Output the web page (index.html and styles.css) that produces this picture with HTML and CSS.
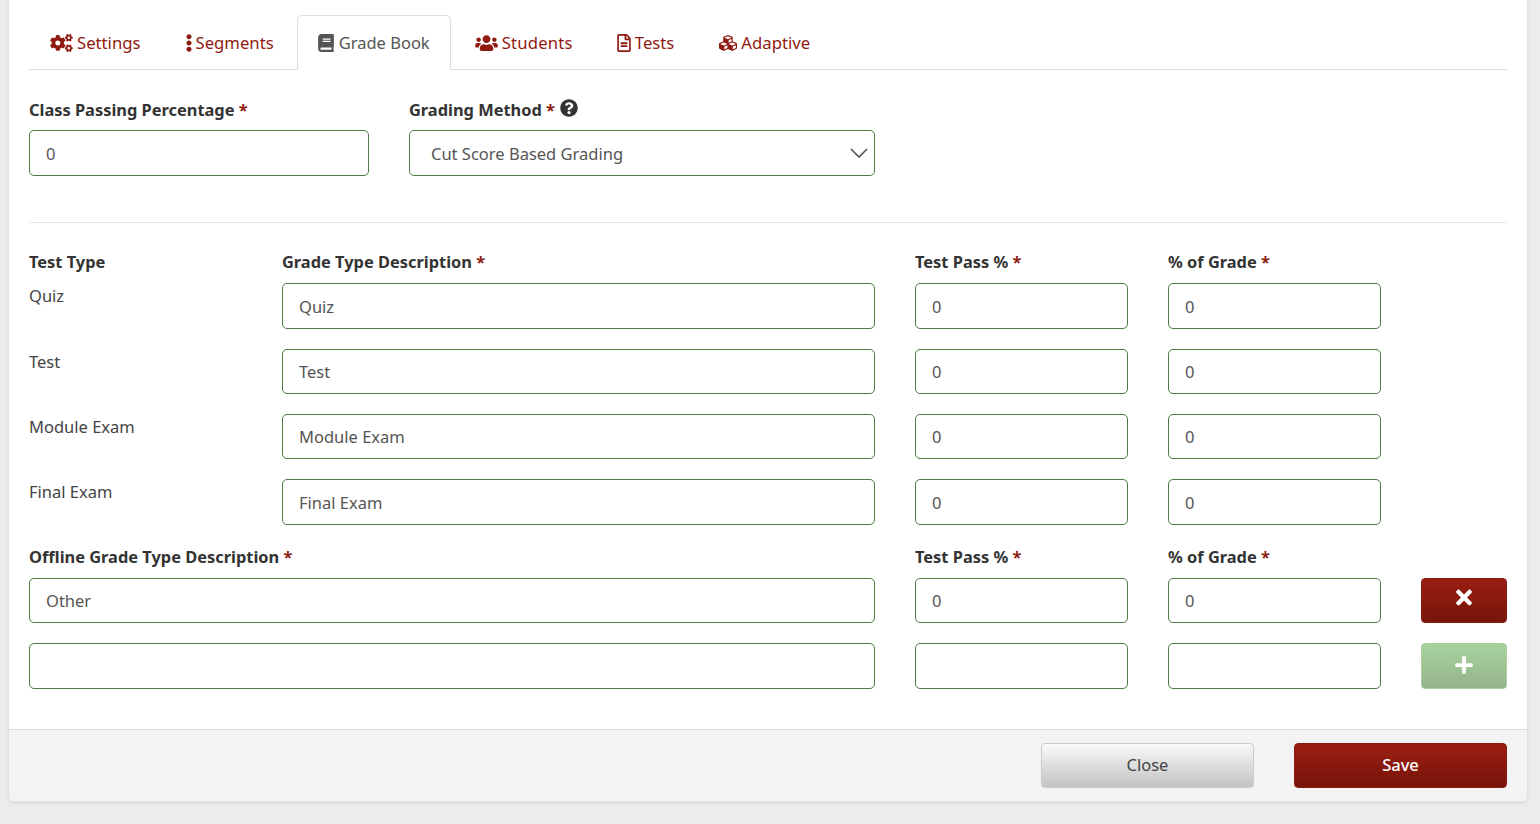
FILE: index.html
```html
<!DOCTYPE html>
<html lang="en">
<head>
  <meta charset="UTF-8">
  <meta name="viewport" content="width=device-width, initial-scale=1.0">
  <title>Grade Book</title>
  <link rel="stylesheet" href="styles.css">
</head>
<body>

<div class="card">
  <div class="card-body">

    <ul class="tabs">
      <li class="tab">
        <svg class="icon icon-cogs" viewBox="0 0 640 512"><path d="M512.1 191l-8.2 14.3c-3 5.3-9.4 7.5-15.1 5.4-11.8-4.4-22.6-10.7-32.1-18.6-4.6-3.8-5.8-10.5-2.8-15.7l8.2-14.3c-6.9-8-12.3-17.3-15.9-27.4h-16.5c-6 0-11.2-4.3-12.2-10.3-2-12-2.1-24.6 0-37.1 1-6 6.2-10.4 12.2-10.4h16.5c3.6-10.1 9-19.4 15.9-27.4l-8.2-14.3c-3-5.2-1.9-11.9 2.8-15.7 9.5-7.9 20.4-14.2 32.1-18.6 5.7-2.1 12.1.1 15.1 5.4l8.2 14.3c10.5-1.9 21.2-1.9 31.7 0L552 6.3c3-5.3 9.4-7.5 15.1-5.4 11.8 4.4 22.6 10.7 32.1 18.6 4.6 3.8 5.8 10.5 2.8 15.7l-8.2 14.3c6.9 8 12.3 17.3 15.9 27.4h16.5c6 0 11.2 4.3 12.2 10.3 2 12 2.1 24.6 0 37.1-1 6-6.2 10.4-12.2 10.4h-16.5c-3.6 10.1-9 19.4-15.9 27.4l8.2 14.3c3 5.2 1.9 11.9-2.8 15.7-9.5 7.9-20.4 14.2-32.1 18.6-5.7 2.1-12.1-.1-15.1-5.4l-8.2-14.3c-10.4 1.9-21.2 1.9-31.7 0zm-10.5-58.8c38.5 29.6 82.4-14.3 52.8-52.8-38.5-29.7-82.4 14.3-52.8 52.8zM386.3 286.1l33.7 16.8c10.1 5.8 14.5 18.1 10.5 29.1-8.9 24.2-26.4 46.4-42.6 65.8-7.4 8.9-20.2 11.1-30.3 5.3l-29.1-16.8c-16 13.7-34.6 24.6-54.9 31.7v33.6c0 11.6-8.3 21.6-19.7 23.6-24.6 4.2-50.4 4.4-75.9 0-11.5-2-20-11.9-20-23.6V418c-20.3-7.2-38.9-18-54.9-31.7L74 403c-10 5.8-22.9 3.6-30.3-5.3-16.2-19.4-33.3-41.6-42.2-65.7-4-10.9.4-23.2 10.5-29.1l33.3-16.8c-3.9-20.9-3.9-42.4 0-63.4L12 205.8c-10.1-5.8-14.6-18.1-10.5-29 8.9-24.2 26-46.4 42.2-65.8 7.4-8.9 20.2-11.1 30.3-5.3l29.1 16.8c16-13.7 34.6-24.6 54.9-31.7V57.1c0-11.5 8.2-21.5 19.6-23.5 24.6-4.2 50.5-4.4 76-.1 11.5 2 20 11.9 20 23.6v33.6c20.3 7.2 38.9 18 54.9 31.7l29.1-16.8c10-5.8 22.9-3.6 30.3 5.3 16.2 19.4 33.2 41.6 42.1 65.8 4 10.9.1 23.2-10 29.1l-33.7 16.8c3.9 21 3.9 42.5 0 63.5zm-117.6 21.1c59.2-77-28.7-164.9-105.7-105.7-59.2 77 28.7 164.9 105.7 105.7zm243.4 182.7l-8.2 14.3c-3 5.3-9.4 7.5-15.1 5.4-11.8-4.4-22.6-10.7-32.1-18.6-4.6-3.8-5.8-10.5-2.8-15.7l8.2-14.3c-6.9-8-12.3-17.3-15.9-27.4h-16.5c-6 0-11.2-4.3-12.2-10.3-2-12-2.1-24.6 0-37.1 1-6 6.2-10.4 12.2-10.4h16.5c3.6-10.1 9-19.4 15.9-27.4l-8.2-14.3c-3-5.2-1.9-11.9 2.8-15.7 9.5-7.9 20.4-14.2 32.1-18.6 5.7-2.1 12.1.1 15.1 5.4l8.2 14.3c10.5-1.9 21.2-1.9 31.7 0l8.2-14.3c3-5.3 9.4-7.5 15.1-5.4 11.8 4.4 22.6 10.7 32.1 18.6 4.6 3.8 5.8 10.5 2.8 15.7l-8.2 14.3c6.9 8 12.3 17.3 15.9 27.4h16.5c6 0 11.2 4.3 12.2 10.3 2 12 2.1 24.6 0 37.1-1 6-6.2 10.4-12.2 10.4h-16.5c-3.6 10.1-9 19.4-15.9 27.4l8.2 14.3c3 5.2 1.9 11.9-2.8 15.7-9.5 7.9-20.4 14.2-32.1 18.6-5.7 2.1-12.1-.1-15.1-5.4l-8.2-14.3c-10.4 1.9-21.2 1.9-31.7 0zM501.6 431c38.5 29.6 82.4-14.3 52.8-52.8-38.5-29.6-82.4 14.3-52.8 52.8z"/></svg>
        Settings
      </li>
      <li class="tab">
        <svg class="icon icon-dots" viewBox="0 0 192 512"><path d="M96 184c39.8 0 72 32.2 72 72s-32.2 72-72 72-72-32.2-72-72 32.2-72 72-72zM24 80c0 39.8 32.2 72 72 72s72-32.2 72-72S135.8 8 96 8 24 40.2 24 80zm0 352c0 39.8 32.2 72 72 72s72-32.2 72-72-32.2-72-72-72-72 32.2-72 72z"/></svg>
        Segments
      </li>
      <li class="tab active">
        <svg class="icon icon-book" viewBox="0 0 448 512"><path d="M448 360V24c0-13.3-10.7-24-24-24H96C43 0 0 43 0 96v320c0 53 43 96 96 96h328c13.3 0 24-10.7 24-24v-16c0-7.5-3.5-14.3-8.9-18.7-4.2-15.4-4.2-59.3 0-74.7 5.4-4.3 8.9-11.1 8.9-18.6zM128 134c0-3.3 2.7-6 6-6h212c3.3 0 6 2.7 6 6v20c0 3.3-2.7 6-6 6H134c-3.3 0-6-2.7-6-6v-20zm0 64c0-3.3 2.7-6 6-6h212c3.3 0 6 2.7 6 6v20c0 3.3-2.7 6-6 6H134c-3.3 0-6-2.7-6-6v-20zm253.4 250H96c-17.7 0-32-14.3-32-32 0-17.6 14.4-32 32-32h285.4c-1.9 17.1-1.9 46.9 0 64z"/></svg>
        Grade Book
      </li>
      <li class="tab tab-students">
        <svg class="icon icon-users" viewBox="0 0 640 512"><path d="M96 224c35.3 0 64-28.7 64-64s-28.7-64-64-64-64 28.7-64 64 28.7 64 64 64zm448 0c35.3 0 64-28.7 64-64s-28.7-64-64-64-64 28.7-64 64 28.7 64 64 64zm32 32h-64c-17.6 0-33.5 7.1-45.1 18.6 40.3 22.1 68.9 62 75.1 109.4h66c17.7 0 32-14.3 32-32v-32c0-35.3-28.7-64-64-64zm-256 0c61.9 0 112-50.1 112-112S381.9 32 320 32 208 82.1 208 144s50.1 112 112 112zm76.8 32h-8.3c-20.8 10-43.9 16-68.5 16s-47.6-6-68.5-16h-8.3C179.6 288 128 339.6 128 403.2V432c0 26.5 21.5 48 48 48h288c26.5 0 48-21.5 48-48v-28.8c0-63.6-51.6-115.2-115.2-115.2zm-223.7-13.4C161.5 263.1 145.6 256 128 256H64c-35.3 0-64 28.7-64 64v32c0 17.7 14.3 32 32 32h65.9c6.3-47.4 34.9-87.3 75.2-109.4z"/></svg>
        Students
      </li>
      <li class="tab">
        <svg class="icon icon-file" viewBox="0 0 384 512"><path d="M288 248v28c0 6.6-5.4 12-12 12H108c-6.6 0-12-5.4-12-12v-28c0-6.6 5.4-12 12-12h168c6.6 0 12 5.4 12 12zm-12 72H108c-6.6 0-12 5.4-12 12v28c0 6.6 5.4 12 12 12h168c6.6 0 12-5.4 12-12v-28c0-6.6-5.4-12-12-12zm108-188.1V464c0 26.5-21.5 48-48 48H48c-26.5 0-48-21.5-48-48V48C0 21.5 21.5 0 48 0h204.1C264.8 0 277 5.1 286 14.1L369.9 98c9 8.9 14.1 21.2 14.1 33.9zm-128-80V128h76.1L256 51.9zM336 464V176H232c-13.3 0-24-10.7-24-24V48H48v416h288z"/></svg>
        Tests
      </li>
      <li class="tab">
        <svg class="icon icon-cubes" viewBox="0 0 512 512"><path d="M488.6 250.2L392 214V105.5c0-15-9.3-28.4-23.4-33.7l-100-37.5c-8.1-3.1-17.1-3.1-25.3 0l-100 37.5c-14.1 5.3-23.4 18.7-23.4 33.7V214l-96.6 36.2C9.3 255.5 0 268.9 0 283.9V394c0 13.6 7.7 26.1 19.9 32.2l100 50c10.1 5.1 22.1 5.1 32.2 0l103.9-52 103.9 52c10.1 5.1 22.1 5.1 32.2 0l100-50c12.2-6.1 19.9-18.6 19.9-32.2V283.9c0-15-9.3-28.4-23.4-33.7zM358 214.8l-85 31.9v-68.2l85-37v73.3zM154 104.1l102-38.2 102 38.2v.6l-102 41.4-102-41.4v-.6zm84 291.1l-85 42.5v-79.1l85-38.8v75.4zm0-112l-102 41.4-102-41.4v-.6l102-38.2 102 38.2v.6zm240 112l-85 42.5v-79.1l85-38.8v75.4zm0-112l-102 41.4-102-41.4v-.6l102-38.2 102 38.2v.6z"/></svg>
        Adaptive
      </li>
    </ul>

    <div class="top-row">
      <div class="field field-passing">
        <label class="label">Class Passing Percentage <span class="req">*</span></label>
        <input class="input" type="text" value="0">
      </div>
      <div class="field field-method">
        <label class="label">Grading Method <span class="req">*</span>
          <svg class="icon-help" viewBox="0 0 512 512"><path d="M504 256c0 136.997-111.043 248-248 248S8 392.997 8 256C8 119.083 119.043 8 256 8s248 111.083 248 248zM262.655 90c-54.497 0-89.255 22.957-116.549 63.758-3.536 5.286-2.353 12.415 2.715 16.258l34.699 26.31c5.205 3.947 12.621 3.008 16.665-2.122 17.864-22.658 30.113-35.797 57.303-35.797 20.429 0 45.698 13.148 45.698 32.958 0 14.976-12.363 22.667-32.534 33.976C247.128 238.528 216 254.941 216 296v4c0 6.627 5.373 12 12 12h56c6.627 0 12-5.373 12-12v-1.333c0-28.462 83.186-29.647 83.186-106.667 0-58.002-60.165-102-116.531-102zM256 338c-25.365 0-46 20.635-46 46 0 25.364 20.635 46 46 46s46-20.636 46-46c0-25.365-20.635-46-46-46z"/></svg>
        </label>
        <div class="select-wrap">
          <select class="input select">
            <option>Cut Score Based Grading</option>
          </select>
          <svg class="chevron" viewBox="0 0 18 11"><path d="M1 1l8 8 8-8" fill="none" stroke="#555" stroke-width="1.6"/></svg>
        </div>
      </div>
    </div>

    <hr class="divider">

    <div class="grade-row grade-head">
      <label class="label">Test Type</label>
      <label class="label">Grade Type Description <span class="req">*</span></label>
      <label class="label">Test Pass % <span class="req">*</span></label>
      <label class="label">% of Grade <span class="req">*</span></label>
    </div>
    <div class="grade-row">
      <div class="type-name">Quiz</div>
      <input class="input" type="text" value="Quiz">
      <input class="input" type="text" value="0">
      <input class="input" type="text" value="0">
    </div>
    <div class="grade-row">
      <div class="type-name">Test</div>
      <input class="input" type="text" value="Test">
      <input class="input" type="text" value="0">
      <input class="input" type="text" value="0">
    </div>
    <div class="grade-row">
      <div class="type-name">Module Exam</div>
      <input class="input" type="text" value="Module Exam">
      <input class="input" type="text" value="0">
      <input class="input" type="text" value="0">
    </div>
    <div class="grade-row">
      <div class="type-name">Final Exam</div>
      <input class="input" type="text" value="Final Exam">
      <input class="input" type="text" value="0">
      <input class="input" type="text" value="0">
    </div>

    <div class="grade-row grade-head">
      <label class="label span-2">Offline Grade Type Description <span class="req">*</span></label>
      <label class="label">Test Pass % <span class="req">*</span></label>
      <label class="label">% of Grade <span class="req">*</span></label>
    </div>
    <div class="grade-row">
      <input class="input span-2" type="text" value="Other">
      <input class="input" type="text" value="0">
      <input class="input" type="text" value="0">
      <button class="btn btn-red" type="button">
        <svg class="btn-icon icon-times" viewBox="0 0 352 512"><path d="M242.72 256l100.07-100.07c12.28-12.28 12.28-32.19 0-44.48l-22.24-22.24c-12.28-12.28-32.19-12.28-44.48 0L176 189.28 75.93 89.21c-12.28-12.28-32.19-12.28-44.48 0L9.21 111.45c-12.28 12.28-12.28 32.19 0 44.48L109.28 256 9.21 356.07c-12.28 12.28-12.28 32.19 0 44.48l22.24 22.24c12.28 12.28 32.2 12.28 44.48 0L176 322.72l100.07 100.07c12.28 12.28 32.2 12.28 44.48 0l22.24-22.24c12.28-12.28 12.28-32.19 0-44.48L242.72 256z"/></svg>
      </button>
    </div>
    <div class="grade-row">
      <input class="input span-2" type="text">
      <input class="input" type="text">
      <input class="input" type="text">
      <button class="btn btn-green" type="button">
        <svg class="btn-icon icon-plus" viewBox="0 0 448 512"><path d="M416 208H272V64c0-17.67-14.33-32-32-32h-32c-17.67 0-32 14.33-32 32v144H32c-17.67 0-32 14.33-32 32v32c0 17.67 14.33 32 32 32h144v144c0 17.67 14.33 32 32 32h32c17.67 0 32-14.33 32-32V304h144c17.67 0 32-14.33 32-32v-32c0-17.67-14.33-32-32-32z"/></svg>
      </button>
    </div>

  </div>

  <div class="card-footer">
    <button class="btn btn-wide btn-grey" type="button">Close</button>
    <button class="btn btn-wide btn-red" type="button">Save</button>
  </div>
</div>

</body>
</html>
```

FILE: styles.css
```css
body {
  font-family: "Noto Sans", Arial, sans-serif;
  font-size: 16.5px;
  color: #444;
  margin: 0;
  padding: 0 12px 22px 8px;
  background-color: #ececec;
}
.card {
  background-color: #fff;
  border: 1px solid #e2e2e2;
  border-top: none;
  border-radius: 0 0 6px 6px;
  box-shadow: 0 1px 3px rgba(0, 0, 0, 0.1);
}
.card-body {
  padding: 15px 20px 20px 20px;
}

/* Tabs */
.tabs {
  display: flex;
  gap: 2px;
  list-style: none;
  margin: 0;
  padding: 0;
  height: 55px;
  box-sizing: border-box;
  border-bottom: 1px solid #ddd;
}
.tab {
  display: flex;
  align-items: center;
  padding: 0 20px;
  height: 55px;
  box-sizing: border-box;
  border: 1px solid transparent;
  border-radius: 5px 5px 0 0;
  color: #8f1a10;
  font-size: 16.7px;
  white-space: nowrap;
}
.tab.active {
  color: #555;
  background-color: #fff;
  border-color: #ddd;
  border-bottom-color: #fff;
  font-size: 16.5px;
  margin-right: 1px;
}
.tab-students {
  letter-spacing: 0.2px;
}
.icon {
  fill: currentColor;
  height: 18px;
  margin-right: 3px;
  flex-shrink: 0;
}
.icon-cogs { width: 23px; margin-right: 4px; }
.icon-dots { width: 8px; }
.icon-book { width: 16px; margin-right: 5px; }
.icon-users { width: 23px; margin-right: 4px; }
.icon-file { width: 14px; margin-right: 4px; }
.icon-cubes { width: 20px; }

/* Form */
.label {
  display: block;
  height: 33.27px;
  line-height: 24px;
  font-size: 16.4px;
  font-weight: 700;
  color: #333;
}
.top-row .label {
  line-height: 26px;
}
.req {
  color: #8b1a10;
}
.input {
  display: block;
  width: 100%;
  height: 45.33px;
  padding: 0 16px;
  box-sizing: border-box;
  border: 1px solid #4a7c41;
  border-radius: 5px;
  background-color: #fff;
  font-family: inherit;
  font-size: inherit;
  color: #555;
}
.top-row {
  display: flex;
  gap: 40px;
  margin-top: 27.13px;
}
.field-passing {
  width: 340px;
}
.field-method {
  width: 466px;
}
.icon-help {
  width: 18px;
  height: 18px;
  margin-left: 1px;
  fill: #333;
  vertical-align: -1px;
}
.select-wrap {
  position: relative;
}
.select {
  appearance: none;
  padding-left: 21px;
}
.chevron {
  position: absolute;
  right: 7px;
  top: 18px;
  width: 18px;
  height: 11px;
  pointer-events: none;
}
.divider {
  border: none;
  border-top: 1px solid #e8e8e8;
  margin: 46.27px 0 27.13px 0;
}
.grade-row {
  display: grid;
  grid-template-columns: 213px 593px 213px 213px 86px;
  column-gap: 40px;
  margin-bottom: 20px;
}
.grade-head {
  margin-bottom: 0;
}
.span-2 {
  grid-column: span 2;
}
.type-name {
  line-height: 24px;
  padding-top: 1px;
  color: #444;
}

/* Buttons */
.btn {
  height: 45.33px;
  border-radius: 4px;
  border: 1px solid transparent;
  font-family: inherit;
  font-size: inherit;
  display: flex;
  align-items: center;
  justify-content: center;
  padding: 0;
}
.btn-wide {
  width: 213px;
  padding-bottom: 2px;
}
.btn-icon {
  fill: #fff;
}
.icon-times {
  width: 16px;
  height: 23px;
  margin-top: -6px;
}
.icon-plus {
  width: 18px;
  height: 20px;
  margin-top: -1px;
}
.btn-red {
  color: #fff;
  font-weight: 500;
  background: linear-gradient(#9a1e12, #78140a);
  border-color: #8b1a10;
}
.btn-green {
  background: linear-gradient(#a6d29d, #96b38c);
  border-color: #a8d0a0;
}
.btn-grey {
  color: #444;
  background: linear-gradient(#f9f9f9, #c3c3c3);
  border-color: #ccc;
}
.card-footer {
  display: flex;
  justify-content: flex-end;
  gap: 40px;
  padding: 13.33px 20px 12.33px 20px;
  background-color: #f3f3f3;
  border-top: 1px solid #ddd;
  border-radius: 0 0 6px 6px;
}
```
